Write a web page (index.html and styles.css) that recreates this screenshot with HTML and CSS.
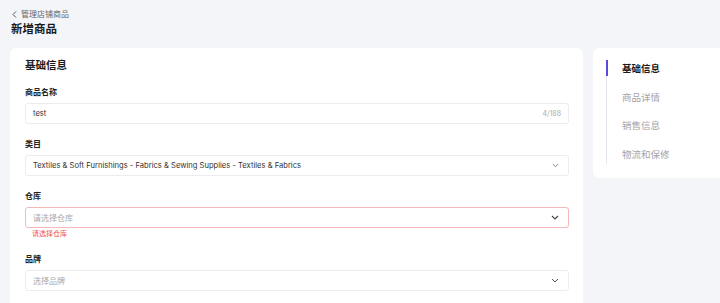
FILE: index.html
```html
<!DOCTYPE html>
<html lang="zh-CN">
<head>
  <meta charset="UTF-8">
  <meta name="viewport" content="width=device-width, initial-scale=1.0">
  <title>新增商品</title>
  <link rel="stylesheet" href="styles.css">
</head>
<body>
  <div class="page">
    <a class="breadcrumb" href="#">
      <svg width="5" height="7" viewBox="0 0 5 7"><path d="M4 0.5 L1 3.5 L4 6.5" fill="none" stroke="#555" stroke-width="1"/></svg>
      <span>管理店铺商品</span>
    </a>
    <h1 class="page-title">新增商品</h1>

    <div class="layout">
      <div class="card main-card">
        <div class="section-title">基础信息</div>

        <div class="field">
          <div class="field-label">商品名称</div>
          <div class="control">
            <span class="control-value">test</span>
            <span class="counter">4/188</span>
          </div>
        </div>

        <div class="field">
          <div class="field-label">类目</div>
          <div class="control">
            <span class="control-value">Textiles &amp; Soft Furnishings - Fabrics &amp; Sewing Supplies - Textiles &amp; Fabrics</span>
            <svg class="chevron" width="7" height="5" viewBox="0 0 7 5"><path d="M0.8 1 L3.5 3.7 L6.2 1" fill="none" stroke="#777" stroke-width="0.9"/></svg>
          </div>
        </div>

        <div class="field">
          <div class="field-label">仓库</div>
          <div class="control error">
            <span class="control-placeholder">请选择仓库</span>
            <svg class="chevron" width="8" height="5" viewBox="0 0 8 5"><path d="M1 1 L4 4 L7 1" fill="none" stroke="#444" stroke-width="1.1"/></svg>
          </div>
          <div class="error-text">请选择仓库</div>
        </div>

        <div class="field">
          <div class="field-label">品牌</div>
          <div class="control">
            <span class="control-placeholder">选择品牌</span>
            <svg class="chevron" width="8" height="5" viewBox="0 0 8 5"><path d="M1 1 L4 4 L7 1" fill="none" stroke="#555" stroke-width="1"/></svg>
          </div>
        </div>
      </div>

      <div class="card side-card">
        <ul class="side-nav">
          <li class="active">基础信息</li>
          <li>商品详情</li>
          <li>销售信息</li>
          <li>物流和保修</li>
        </ul>
      </div>
    </div>
  </div>
</body>
</html>
```

FILE: styles.css
```css
body {
  font-family: Inter, "Noto Sans CJK SC", sans-serif;
  margin: 0;
  background-color: #f4f5f8;
  color: #222;
  overflow: hidden;
}

.page {
  padding: 8px 0 0 10px;
}

.breadcrumb {
  display: flex;
  align-items: center;
  gap: 4px;
  padding-left: 2px;
  font-size: 8px;
  line-height: 12px;
  color: #666;
  text-decoration: none;
  margin-bottom: 1px;
}

.page-title {
  margin: 0 0 11px 1px;
  font-size: 11.5px;
  line-height: 16px;
  font-weight: 700;
  color: #1a1a1a;
}

.layout {
  display: flex;
  align-items: flex-start;
  gap: 10px;
}

.card {
  background-color: #fff;
  border-radius: 6px;
}

.main-card {
  flex: 0 0 573px;
  box-sizing: border-box;
  padding: 11px 14px 0 15px;
  height: 262px;
}

.section-title {
  font-size: 10.5px;
  line-height: 14px;
  font-weight: 700;
  margin-bottom: 13px;
  color: #1a1a1a;
}

.field {
  margin-bottom: 14px;
}

.field-label {
  font-size: 8px;
  line-height: 12px;
  font-weight: 700;
  margin-bottom: 5px;
  color: #222;
}

.control {
  height: 21px;
  box-sizing: border-box;
  border: 1px solid #ececef;
  border-radius: 3px;
  display: flex;
  align-items: center;
  justify-content: space-between;
  padding: 0 9px 0 7px;
  font-size: 8px;
}

.control.error {
  border-color: #f5b8b8;
}

.control-value {
  color: #333;
  font-size: 7.6px;
}

.control-placeholder {
  color: #a8a8ad;
}

.counter {
  color: #aaa;
  font-size: 7px;
  margin-right: -2px;
}

.chevron {
  display: block;
}

.error-text {
  color: #f0504f;
  font-size: 7px;
  line-height: 10px;
  margin-top: 1px;
  padding-left: 7px;
}

.side-card {
  flex: 0 0 140px;
  padding: 12px 0 14px 13px;
}

.side-nav {
  list-style: none;
  margin: 0;
  padding: 0 0 0 15px;
  border-left: 1px solid #e6e6ec;
  display: flex;
  flex-direction: column;
  gap: 10.5px;
}

.side-nav li {
  position: relative;
  font-size: 9.5px;
  line-height: 18px;
  color: #a3a3ab;
}

.side-nav li.active {
  color: #1a1a1a;
  font-weight: 700;
}

.side-nav li.active::before {
  content: "";
  position: absolute;
  left: -16px;
  top: 0;
  width: 2px;
  height: 16px;
  background-color: #5a4bdc;
}
```
